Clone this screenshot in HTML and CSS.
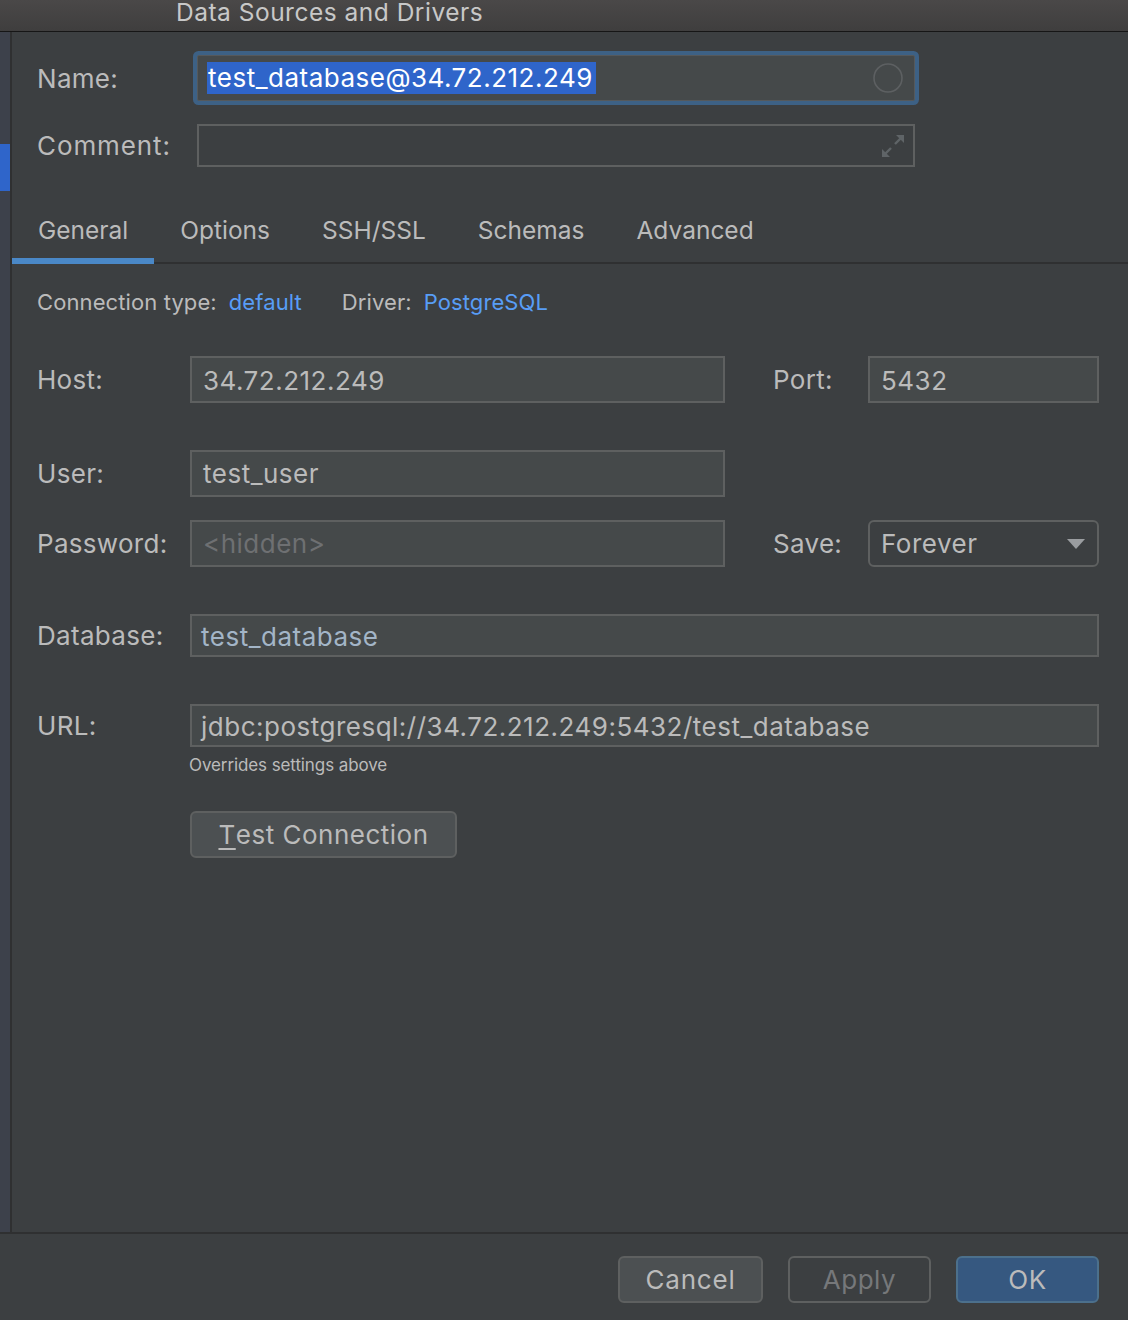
FILE: index.html
```html
<!DOCTYPE html>
<html>
<head>
<meta charset="utf-8">
<link rel="stylesheet" href="styles.css">
</head>
<body>
<div class="window">
  <div class="titlebar"><span class="title">Data Sources and Drivers</span></div>
  <div class="main">
    <div class="sidebar"><div class="side-sel"></div></div>
    <div class="content">
      <div class="head">
        <div class="row name-row">
          <label class="lbl lbl-head">Name:</label>
          <div class="field name-field">
            <span class="sel">test_database@34.72.212.249</span>
            <svg class="circle" width="32" height="32" viewBox="0 0 32 32"><circle cx="16" cy="16" r="14" fill="none" stroke="#5d6062" stroke-width="1.6"/></svg>
          </div>
        </div>
        <div class="row comment-row">
          <label class="lbl lbl-head">Comment:</label>
          <div class="field comment-field">
            <svg class="expand" width="24" height="24" viewBox="0 0 24 24">
              <path d="M14 10 L20 4" stroke="#5f6467" stroke-width="2.4" fill="none"/>
              <polygon points="15,1 23,1 23,9" fill="#5f6467"/>
              <path d="M10 14 L4 20" stroke="#5f6467" stroke-width="2.4" fill="none"/>
              <polygon points="1,15 1,23 9,23" fill="#5f6467"/>
            </svg>
          </div>
        </div>
      </div>
      <div class="tabs">
        <div class="tab active">General</div>
        <div class="tab">Options</div>
        <div class="tab">SSH/SSL</div>
        <div class="tab">Schemas</div>
        <div class="tab">Advanced</div>
      </div>
      <div class="panel">
        <div class="conn-row">
          <span>Connection type:</span><span class="link">default</span>
          <span class="driver">Driver:</span><span class="link">PostgreSQL</span>
        </div>
        <div class="row frow host-row">
          <label class="lbl">Host:</label>
          <div class="field f-mid">34.72.212.249</div>
          <label class="lbl lbl-right">Port:</label>
          <div class="field f-small">5432</div>
        </div>
        <div class="row frow user-row">
          <label class="lbl">User:</label>
          <div class="field f-mid">test_user</div>
        </div>
        <div class="row frow pass-row">
          <label class="lbl">Password:</label>
          <div class="field f-mid placeholder">&lt;hidden&gt;</div>
          <label class="lbl lbl-right">Save:</label>
          <div class="combo">Forever<span class="arrow"></span></div>
        </div>
        <div class="row frow db-row">
          <label class="lbl">Database:</label>
          <div class="field f-wide db-text">test_database</div>
        </div>
        <div class="row frow url-row">
          <label class="lbl">URL:</label>
          <div class="field f-wide url-text">jdbc:postgresql://34.72.212.249:5432/test_database</div>
        </div>
        <div class="hint">Overrides settings above</div>
        <div class="btn test-btn"><u>T</u>est Connection</div>
      </div>
    </div>
  </div>
  <div class="footer">
    <div class="btn fbtn cancel">Cancel</div>
    <div class="btn fbtn apply">Apply</div>
    <div class="btn fbtn ok">OK</div>
  </div>
</div>
</body>
</html>
```

FILE: styles.css
```css
* { box-sizing: border-box; }
html, body {
  margin: 0;
  padding: 0;
  background: #3c3f41;
  font-family: Inter, "Noto Sans", sans-serif;
  color: #bbbbbb;
}
.window {
  width: 1128px;
  height: 1320px;
  display: flex;
  flex-direction: column;
  overflow: hidden;
}
.titlebar {
  height: 32px;
  flex: none;
  background: linear-gradient(#4a4848, #3f3e3e);
  border-bottom: 1px solid #161616;
  padding-left: 176px;
  overflow: hidden;
}
.title {
  display: block;
  font-size: 24.5px;
  line-height: 24px;
  letter-spacing: 0.5px;
  color: #c8c8c8;
}
.main {
  height: 1200px;
  flex: none;
  display: flex;
}
.sidebar {
  width: 12px;
  flex: none;
  background: #3d414b;
  border-right: 2px solid #2f3031;
}
.side-sel {
  margin-top: 112px;
  height: 47px;
  width: 10px;
  background: #2f65ca;
}
.content {
  flex: 1;
  display: flex;
  flex-direction: column;
}
.head {
  padding: 19px 0 0 25px;
}
.row {
  display: flex;
  align-items: center;
}
.lbl {
  font-size: 26px;
  letter-spacing: 0.3px;
  color: #bbbbbb;
  flex: none;
}
.lbl-head { width: 160px; }
.comment-row .lbl { letter-spacing: 0.9px; }
.name-row { height: 54px; }
.field {
  background: #45494a;
  border: 2px solid #5e6060;
  font-size: 26px;
  letter-spacing: 0.5px;
  color: #bbbbbb;
  display: flex;
  align-items: center;
  padding-left: 11px;
  white-space: nowrap;
}
.name-field {
  width: 718px;
  height: 46px;
  border: 1px solid #55595c;
  box-shadow: 0 0 0 4px #3d6185;
  border-radius: 2px;
  padding-left: 9px;
  justify-content: space-between;
  padding-right: 10px;
}
.sel {
  background: #2f65ca;
  color: #ffffff;
  line-height: 32px;
  padding: 0 3px 0 1px;
}
.circle { flex: none; }
.comment-row { margin-top: 19px; height: 43px; }
.comment-field {
  width: 718px;
  height: 43px;
  background: transparent;
  justify-content: flex-end;
  padding-right: 8px;
}
.tabs {
  margin-top: 31px;
  display: flex;
  height: 66px;
  border-bottom: 2px solid #2f3031;
}
.tab {
  position: relative;
  height: 64px;
  line-height: 64px;
  font-size: 24.5px;
  padding: 0 26px;
  color: #bbbbbb;
}
.tab.active::after {
  content: "";
  position: absolute;
  left: 0;
  right: 0;
  bottom: -2px;
  height: 6px;
  background: #4a88c7;
}
.panel {
  padding-left: 25px;
}
.conn-row {
  margin-top: 24px;
  height: 28px;
  line-height: 28px;
  font-size: 22px;
  letter-spacing: 0.1px;
  color: #bbbbbb;
  display: flex;
}
.link { color: #589df6; margin-left: 12px; }
.driver { margin-left: 40px; }
.frow .lbl { width: 153px; }
.frow .lbl-right { width: 95px; margin-left: 48px; }
.f-mid { width: 535px; }
.f-small { width: 231px; }
.f-wide { width: 909px; }
.host-row { margin-top: 40px; }
.host-row .field, .user-row .field, .pass-row .field { height: 47px; }
.host-row .field { padding-top: 2px; }
.user-row { margin-top: 47px; }
.pass-row { margin-top: 23px; }
.placeholder { color: #6e7072; }
.combo {
  width: 231px;
  height: 47px;
  border: 2px solid #5e6060;
  border-radius: 6px;
  font-size: 26px;
  letter-spacing: 0.5px;
  color: #bbbbbb;
  display: flex;
  align-items: center;
  justify-content: space-between;
  padding: 0 12px 0 11px;
}
.arrow {
  width: 0;
  height: 0;
  border-left: 9px solid transparent;
  border-right: 9px solid transparent;
  border-top: 10px solid #9a9da0;
}
.db-row { margin-top: 47px; }
.db-row .field, .url-row .field { height: 43px; padding-left: 9px; padding-top: 2px; }
.db-text { color: #a3b5c7; }
.url-row { margin-top: 47px; }
.hint {
  margin-top: 7px;
  margin-left: 152px;
  font-size: 17px;
  line-height: 22px;
  letter-spacing: -0.1px;
  color: #bbbbbb;
}
.btn {
  background: #4c5052;
  border: 2px solid #5e6060;
  border-radius: 6px;
  font-size: 26px;
  color: #bbbbbb;
  display: flex;
  align-items: center;
  justify-content: center;
}
.btn u { text-decoration-thickness: 2px; text-underline-offset: 4px; }
.test-btn {
  margin-top: 35px;
  margin-left: 153px;
  width: 267px;
  height: 47px;
  letter-spacing: 0.5px;
}
.footer {
  flex: 1;
  border-top: 2px solid #2f3031;
  display: flex;
  justify-content: flex-end;
  align-items: flex-start;
  padding: 22px 29px 0 0;
  gap: 25px;
}
.fbtn { height: 47px; width: 143px; letter-spacing: 0.5px; }
.cancel { width: 145px; letter-spacing: 0.8px; }
.apply { background: transparent; color: #76787a; }
.ok { background: #365880; border-color: #4c708c; }
```
